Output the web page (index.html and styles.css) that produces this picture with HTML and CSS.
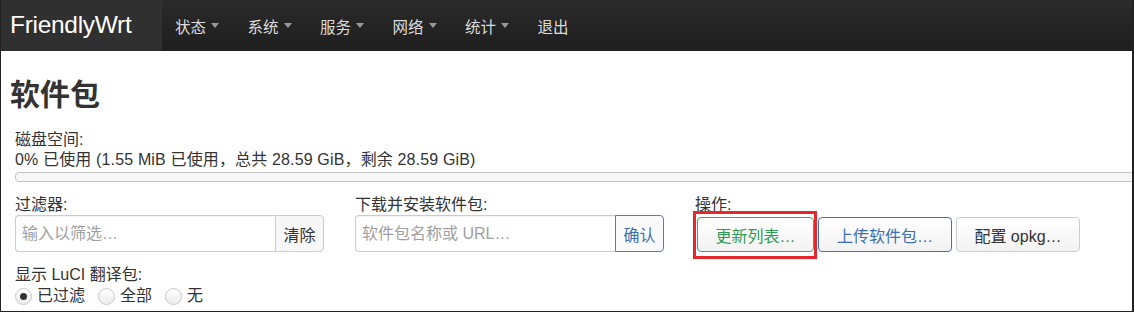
FILE: index.html
```html
<!DOCTYPE html>
<html lang="zh">
<head>
<meta charset="utf-8">
<title>软件包</title>
<link rel="stylesheet" href="styles.css">
</head>
<body>
<div class="frame">
  <header class="topbar">
    <a class="brand">FriendlyWrt</a>
    <nav class="nav">
      <span class="nav-item">状态<i class="caret"></i></span>
      <span class="nav-item">系统<i class="caret"></i></span>
      <span class="nav-item">服务<i class="caret"></i></span>
      <span class="nav-item">网络<i class="caret"></i></span>
      <span class="nav-item">统计<i class="caret"></i></span>
      <span class="nav-item">退出</span>
    </nav>
  </header>
  <main class="content">
    <h1 class="title">软件包</h1>
    <div class="disk">
      <div class="label">磁盘空间:</div>
      <div class="usage">0% 已使用 (1.55 MiB 已使用，总共 28.59 GiB，剩余 28.59 GiB)</div>
      <div class="progress"><div class="bar" style="width:0%"></div></div>
    </div>
    <div class="controls">
      <div class="col">
        <div class="label">过滤器:</div>
        <div class="group">
          <input class="field" type="text" placeholder="输入以筛选…">
          <button class="addon">清除</button>
        </div>
      </div>
      <div class="col">
        <div class="label">下载并安装软件包:</div>
        <div class="group">
          <input class="field" type="text" placeholder="软件包名称或 URL…">
          <button class="addon addon-blue">确认</button>
        </div>
      </div>
      <div class="col col-actions">
        <div class="label">操作:</div>
        <div class="actions">
          <span class="highlight"><button class="btn btn-green">更新列表…</button></span>
          <button class="btn btn-blue">上传软件包…</button>
          <button class="btn btn-grey">配置 opkg…</button>
        </div>
      </div>
    </div>
    <div class="lang">
      <div class="label">显示 LuCI 翻译包:</div>
      <div class="radios">
        <label class="radio"><span class="dot checked"></span>已过滤</label>
        <label class="radio"><span class="dot"></span>全部</label>
        <label class="radio"><span class="dot"></span>无</label>
      </div>
    </div>
  </main>
</div>
</body>
</html>
```
FILE: styles.css
```css
* { box-sizing: border-box; }
html, body { margin: 0; padding: 0; }
body {
  font-family: "Liberation Sans", "Noto Sans CJK SC", sans-serif;
  font-size: 16px;
  color: #333;
  background: #fff;
  width: 1134px;
  height: 312px;
  overflow: hidden;
}
.frame {
  height: 312px;
  border-left: 1px solid #222;
  border-right: 2px solid #222;
  border-bottom: 1px solid #222;
  overflow: hidden;
}
.topbar {
  height: 51px;
  display: flex;
  align-items: stretch;
  background: linear-gradient(#2a2a2a, #1e1e1e);
}
.brand {
  width: 161px;
  flex-shrink: 0;
  display: flex;
  align-items: center;
  padding-left: 9px;
  padding-bottom: 2px;
  background: #303030;
  color: #fff;
  font-size: 24.5px;
  letter-spacing: -0.3px;
}
.nav {
  display: flex;
  align-items: center;
  padding-left: 13px;
}
.nav-item {
  color: #ddd;
  font-size: 15.5px;
  display: flex;
  align-items: center;
  margin-right: 28.5px;
}
.caret {
  display: inline-block;
  width: 0; height: 0;
  margin-left: 5px;
  border-left: 4px solid transparent;
  border-right: 4px solid transparent;
  border-top: 5px solid #999;
}
.content {
  padding: 0 0 0 9px;
}
.title {
  margin: 26px 0 0 0;
  font-size: 30px;
  font-weight: bold;
  line-height: 36px;
  color: #333;
}
.disk {
  margin-top: 17px;
  padding-left: 5px;
}
.label {
  line-height: 20px;
  color: #333;
  white-space: nowrap;
}
.usage { line-height: 20px; white-space: nowrap; letter-spacing: 0.15px; }
.progress {
  height: 10px;
  margin-top: 2px;
  margin-right: -10px;
  border: 1px solid #c4c4c4;
  border-radius: 4px 0 0 4px;
  background: #f7f7f7;
}
.controls {
  display: flex;
  margin-top: 13px;
  padding-left: 5px;
}
.col { width: 340px; flex-shrink: 0; }
.group {
  display: flex;
  width: 309px;
  height: 37px;
}
.field {
  flex: 1;
  min-width: 0;
  border: 1px solid #ccc;
  border-right: none;
  border-radius: 4px 0 0 4px;
  padding: 0 6px;
  font: inherit;
  color: #555;
  box-shadow: inset 0 1px 1px rgba(0,0,0,0.05);
}
.field::placeholder { color: #a0a0a0; }
.addon {
  width: 49px;
  font: inherit;
  border: 1px solid #ccc;
  border-radius: 0 4px 4px 0;
  background: #f7f7f7;
  color: #333;
  padding: 0;
}
.addon-blue { border-color: #4a7fc0; color: #3a6fb5; background: #fafafa; }
.actions {
  display: flex;
  align-items: flex-start;
  margin-top: -4px;
}
.highlight {
  display: inline-flex;
  border: 3px solid #e8262c;
  padding: 3px 0 4px 1px;
  margin-left: -2px;
  position: relative;
}
.btn {
  height: 35px;
  font: inherit;
  border-radius: 4px;
  background: linear-gradient(#fff, #f2f2f2);
  padding: 0;
  white-space: nowrap;
  flex-shrink: 0;
}
.btn-green { width: 117px; border: 1px solid #3aa864; color: #2e9a56; }
.btn-blue { width: 134px; border: 1px solid #3a72c0; color: #3a6fb5; margin: 6px 0 0 1px; }
.btn-grey { width: 124px; border: 1px solid #ccc; color: #333; margin: 6px 0 0 4px; }
.lang {
  margin-top: 6px;
  padding-left: 5px;
}
.radios {
  display: flex;
  align-items: center;
  margin-top: 1px;
}
.radio {
  display: flex;
  align-items: center;
  margin-right: 13px;
  line-height: 20px;
}
.dot {
  width: 17px; height: 17px;
  border-radius: 50%;
  border: 1px solid #c8c8c8;
  background: linear-gradient(#fff, #ececec);
  margin-right: 5px;
  position: relative;
}
.dot.checked::after {
  content: "";
  position: absolute;
  left: 4px; top: 4px;
  width: 7px; height: 7px;
  border-radius: 50%;
  background: #333;
}
```
